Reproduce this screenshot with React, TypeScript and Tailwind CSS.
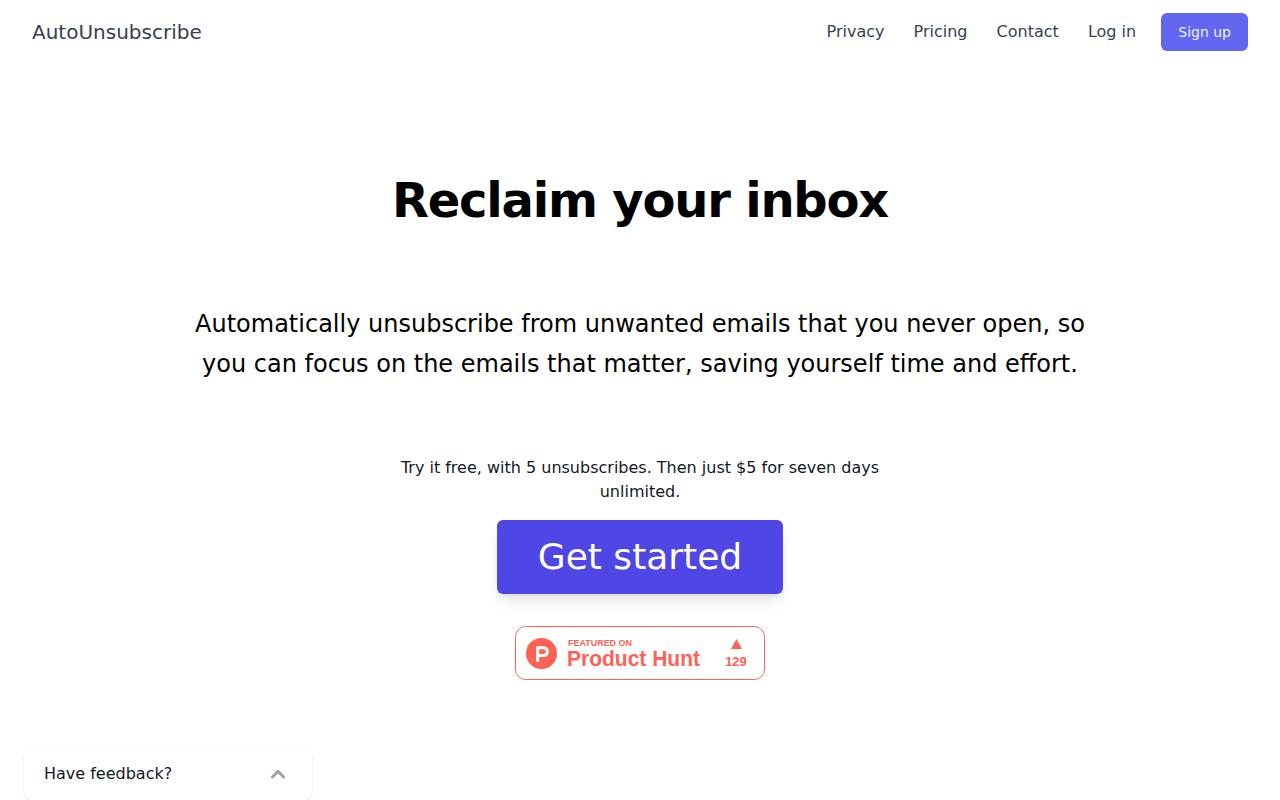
const navLinks = ['Privacy', 'Pricing', 'Contact', 'Log in'];

function Header() {
  return (
    <header className="flex h-16 items-center justify-between px-8">
      <a href="#" className="text-xl text-[#374151]">
        AutoUnsubscribe
      </a>
      <nav className="flex items-center">
        {navLinks.map((label) => (
          <a key={label} href="#" className="mr-[29.09px] text-base text-[#374151] last-of-type:mr-[25.09px]">
            {label}
          </a>
        ))}
        <button className="h-[38px] rounded-md border border-transparent bg-[#6366f1] px-4 text-sm text-[#eef2ff]">
          Sign up
        </button>
      </nav>
    </header>
  );
}

function ProductHuntBadge() {
  return (
    <a href="#" className="mt-8 block">
      <svg
        width="250"
        height="54"
        viewBox="0 0 250 54"
        fill="none"
        fontFamily="Liberation Sans, Arial, sans-serif"
        fontWeight="bold"
      >
        <rect x="0.5" y="0.5" width="249" height="53" rx="10" fill="#fff" stroke="#FF6154" />
        <text x="53" y="20" fontSize="9.6" textLength="64" lengthAdjust="spacingAndGlyphs" fill="#FF6154">
          FEATURED ON
        </text>
        <text x="52" y="40" fontSize="21.4" textLength="133" lengthAdjust="spacingAndGlyphs" fill="#FF6154">
          Product Hunt
        </text>
        <circle cx="26.5" cy="27.5" r="15.5" fill="#FF6154" />
        <path
          d="M28.6 27.9h-4.4v-4.65h4.4a2.325 2.325 0 0 1 0 4.65m0-7.75h-7.5v15.5h3.1V31h4.4a5.425 5.425 0 0 0 0-10.85"
          fill="#fff"
        />
        <path d="M221.5 13L227 23h-11z" fill="#FF6154" />
        <text x="221" y="40" textAnchor="middle" fontSize="13" fill="#FF6154">
          129
        </text>
      </svg>
    </a>
  );
}

export default function App() {
  return (
    <div className="flex h-screen flex-col overflow-hidden bg-white font-['DejaVu_Sans',sans-serif]">
      <Header />

      <main className="flex flex-1 flex-col items-center text-center">
        <h1 className="mt-[112px] text-5xl font-extrabold tracking-tight text-black">Reclaim your inbox</h1>
        <p className="mt-20 w-[896px] text-2xl leading-10 text-black">
          Automatically unsubscribe from unwanted emails that you never open, so you can focus on the emails that
          matter, saving yourself time and effort.
        </p>
        <p className="mt-[72px] w-[512px] text-base text-[#111827]">
          Try it free, with 5 unsubscribes. Then just $5 for seven days unlimited.
        </p>
        <button className="mt-4 h-[74px] w-[286px] rounded-md bg-[#4f46e5] text-4xl text-white shadow-lg">
          Get started
        </button>
        <ProductHuntBadge />
      </main>

      {/* Feedback drawer, collapsed */}
      <button className="ml-6 flex h-[52px] w-72 items-center justify-between rounded-lg bg-white pr-6 pl-5 text-[#111827] shadow">
        Have feedback?
        <svg className="size-5 text-[#9ca3af]" viewBox="0 0 20 20" fill="none">
          <path d="M4.4 13L10 7.4l5.6 5.6" stroke="currentColor" strokeWidth="3" strokeLinecap="round" strokeLinejoin="round" />
        </svg>
      </button>
    </div>
  );
}
